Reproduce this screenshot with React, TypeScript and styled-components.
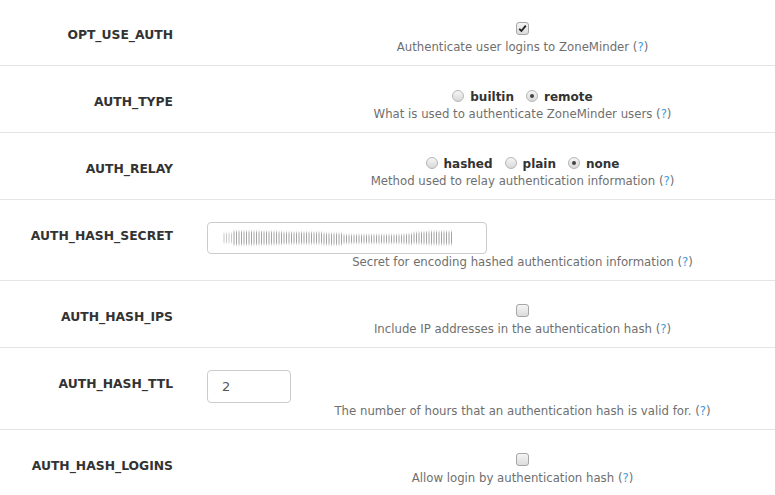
import React from "react";
import styled, { createGlobalStyle } from "styled-components";

const GlobalStyle = createGlobalStyle`
  html, body {
    margin: 0;
    padding: 0;
    background: #ffffff;
  }
  body {
    font-family: "DejaVu Sans", Verdana, sans-serif;
    font-size: 12px;
    color: #333333;
    overflow: hidden;
  }
`;

const Table = styled.div`
  margin-top: -1px;
  width: 775px;
`;

const Row = styled.div`
  display: grid;
  grid-template-columns: 190px 1fr;
  border-bottom: 1px solid #e4e4e4;
`;

const Label = styled.div`
  text-align: right;
  padding: 28px 17px 0 0;
  font-weight: bold;
  font-size: 12.35px;
  line-height: 17px;
  color: #333333;
`;

const Value = styled.div`
  padding: 22px 0 9px;
  display: flex;
  flex-direction: column;
`;

const Controls = styled.div`
  height: 18px;
  padding-left: 80px;
  display: flex;
  align-items: center;
  justify-content: center;
`;

const Description = styled.div`
  padding-left: 80px;
  text-align: center;
  font-size: 11.72px;
  line-height: 17px;
  color: #6f6f6f;
`;

const Help = styled.span`
  color: #6f6f6f;
  b {
    font-weight: normal;
    color: #3d9be0;
  }
`;

const Check = styled.span`
  width: 11px;
  height: 11px;
  border: 1px solid #a6a6a6;
  border-radius: 3px;
  background: linear-gradient(#f4f4f4, #dcdcdc);
  display: inline-flex;
  align-items: center;
  justify-content: center;
  margin-top: -4px;
`;

const RadioGroup = styled.label`
  display: inline-flex;
  align-items: center;
  margin-right: 12px;
  &:last-child {
    margin-right: 0;
  }
`;

const Radio = styled.span<{ $checked?: boolean }>`
  width: 10px;
  height: 10px;
  border: 1px solid #b5b5b5;
  border-radius: 50%;
  background: linear-gradient(#f6f6f6, #d8d8d8);
  display: inline-flex;
  align-items: center;
  justify-content: center;
  margin-right: 6px;
  margin-top: -3px;
  &::after {
    content: "";
    display: ${(p) => (p.$checked ? "block" : "none")};
    width: 4px;
    height: 4px;
    border-radius: 50%;
    background: #444;
  }
`;

const RadioText = styled.span`
  font-weight: bold;
  color: #333;
  line-height: 18px;
`;

const Field = styled.div<{ $width: number; $height: number }>`
  margin-left: 17px;
  width: ${(p) => p.$width}px;
  height: ${(p) => p.$height}px;
  box-sizing: border-box;
  border: 1px solid #cccccc;
  border-radius: 4px;
  display: flex;
  align-items: center;
  padding-left: 14px;
  background: #fff;
`;

const FieldInput = styled.input`
  border: none;
  outline: none;
  padding: 0;
  width: 100%;
  font-family: "DejaVu Sans", Verdana, sans-serif;
  font-size: 13px;
  color: #555;
  background: transparent;
`;

function HelpLink() {
  return (
    <Help>
      (<b>?</b>)
    </Help>
  );
}

function CheckMark() {
  return (
    <svg width="9" height="9" viewBox="0 0 9 9">
      <path d="M1.2 4.8 L3.4 7 L7.8 1.6" fill="none" stroke="#222" strokeWidth="1.8" />
    </svg>
  );
}

// blurred stand-in for the obfuscated secret value
function SecretScribble() {
  const lines = [];
  for (let i = 0; i < 92; i++) {
    const x = 2 + i * 2.5;
    let h: number;
    if (x < 12) h = 10;
    else if (x < 60) h = 14 - (x - 12) * 0.03;
    else if (x < 120) h = 11.5;
    else if (x < 180) h = 8.5;
    else if (x < 210) h = 9 + (x - 180) * 0.14;
    else h = 13;
    const y = 10 + (x > 100 && x < 190 ? 1 : 0);
    lines.push(
      <line
        key={i}
        x1={x}
        x2={x}
        y1={y - h / 2}
        y2={y + h / 2}
        stroke={x < 12 ? "#b0b0b0" : "#7d7d7d"}
        strokeWidth="1"
        opacity={0.7}
      />
    );
  }
  return (
    <svg width="235" height="20" viewBox="0 0 235 20">
      <defs>
        <filter id="blur" x="-5%" y="-20%" width="110%" height="140%">
          <feGaussianBlur stdDeviation="0.45 1" />
        </filter>
      </defs>
      <g filter="url(#blur)">{lines}</g>
    </svg>
  );
}

export default function App() {
  return (
    <>
      <GlobalStyle />
      <Table>
        <Row>
          <Label>OPT_USE_AUTH</Label>
          <Value>
            <Controls>
              <Check>
                <CheckMark />
              </Check>
            </Controls>
            <Description>
              Authenticate user logins to ZoneMinder <HelpLink />
            </Description>
          </Value>
        </Row>
        <Row>
          <Label>AUTH_TYPE</Label>
          <Value>
            <Controls>
              <RadioGroup>
                <Radio />
                <RadioText>builtin</RadioText>
              </RadioGroup>
              <RadioGroup>
                <Radio $checked />
                <RadioText>remote</RadioText>
              </RadioGroup>
            </Controls>
            <Description>
              What is used to authenticate ZoneMinder users <HelpLink />
            </Description>
          </Value>
        </Row>
        <Row>
          <Label>AUTH_RELAY</Label>
          <Value>
            <Controls>
              <RadioGroup>
                <Radio />
                <RadioText>hashed</RadioText>
              </RadioGroup>
              <RadioGroup>
                <Radio />
                <RadioText>plain</RadioText>
              </RadioGroup>
              <RadioGroup>
                <Radio $checked />
                <RadioText>none</RadioText>
              </RadioGroup>
            </Controls>
            <Description>
              Method used to relay authentication information <HelpLink />
            </Description>
          </Value>
        </Row>
        <Row>
          <Label>AUTH_HASH_SECRET</Label>
          <Value>
            <Field $width={280} $height={32}>
              <SecretScribble />
            </Field>
            <Description>
              Secret for encoding hashed authentication information <HelpLink />
            </Description>
          </Value>
        </Row>
        <Row>
          <Label>AUTH_HASH_IPS</Label>
          <Value>
            <Controls>
              <Check />
            </Controls>
            <Description>
              Include IP addresses in the authentication hash <HelpLink />
            </Description>
          </Value>
        </Row>
        <Row>
          <Label>AUTH_HASH_TTL</Label>
          <Value>
            <Field $width={84} $height={33}>
              <FieldInput defaultValue="2" />
            </Field>
            <Description>
              The number of hours that an authentication hash is valid for. <HelpLink />
            </Description>
          </Value>
        </Row>
        <Row>
          <Label>AUTH_HASH_LOGINS</Label>
          <Value>
            <Controls>
              <Check />
            </Controls>
            <Description>
              Allow login by authentication hash <HelpLink />
            </Description>
          </Value>
        </Row>
      </Table>
    </>
  );
}
